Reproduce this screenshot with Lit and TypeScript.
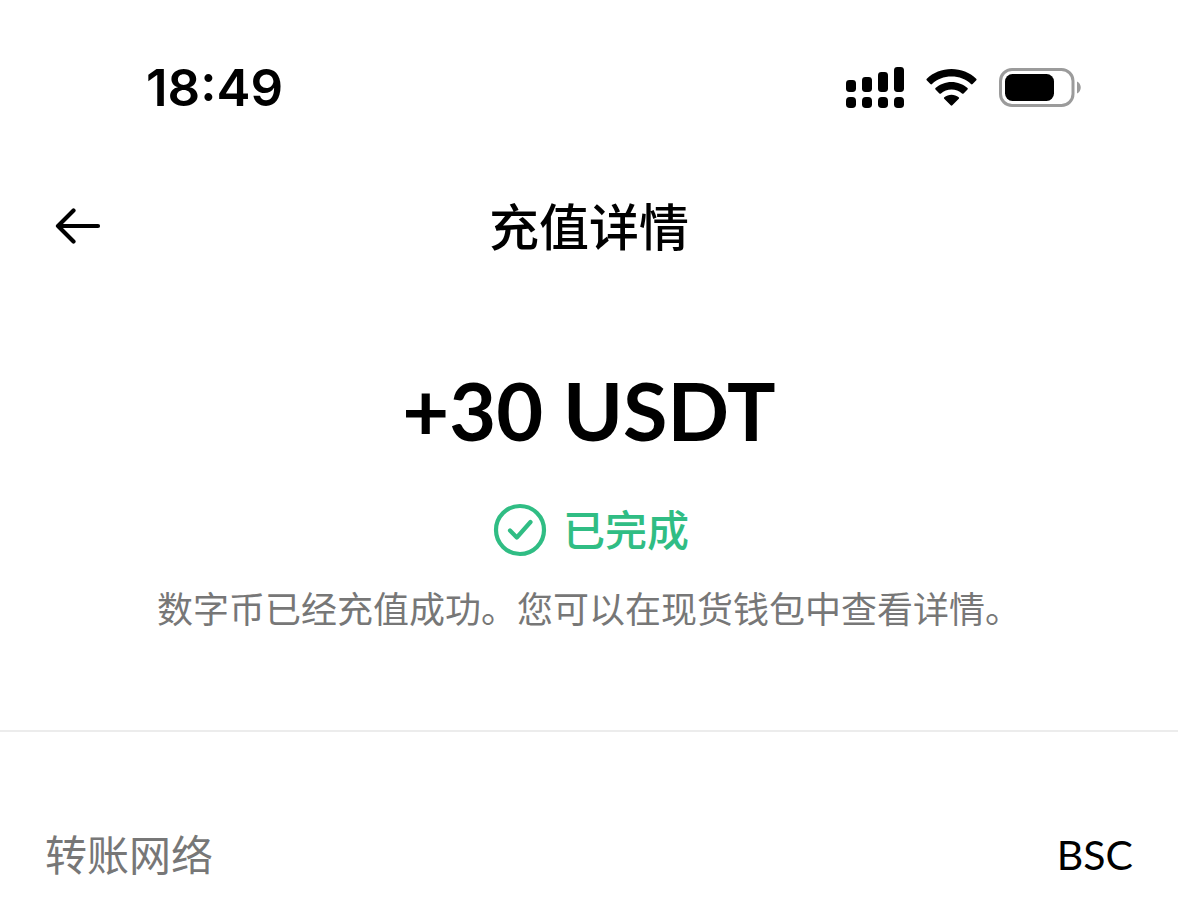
import { LitElement, html, css } from "lit";
import { customElement, property } from "lit/decorators.js";

@customElement("status-bar")
export class StatusBar extends LitElement {
  @property() time = "";

  static styles = css`
    :host {
      display: flex;
      align-items: center;
      justify-content: space-between;
      height: 176px;
      padding: 0 96px 0 146px;
      box-sizing: border-box;
    }
    .time {
      font: 600 51px/62px Inter, "Liberation Sans", sans-serif;
    }
    .icons {
      display: flex;
      align-items: center;
      gap: 22px;
    }
    svg {
      display: block;
    }
  `;

  render() {
    return html`
      <span class="time">${this.time}</span>
      <div class="icons">
        <svg width="58" height="42" viewBox="0 0 58 42" role="img" aria-label="Signal">
          <rect x="0" y="13" width="10" height="12" rx="3.4" />
          <rect x="16" y="10" width="10" height="15" rx="3.4" />
          <rect x="32" y="5" width="10" height="20" rx="3.4" />
          <rect x="48" y="0" width="10" height="25" rx="3.4" />
          <rect x="0" y="30" width="10" height="11" rx="3.8" />
          <rect x="16" y="30" width="10" height="11" rx="3.8" />
          <rect x="32" y="30" width="10" height="11" rx="3.8" />
          <rect x="48" y="30" width="10" height="11" rx="3.8" />
        </svg>
        <svg width="51" height="38" viewBox="0 0 51 38" role="img" aria-label="Wi-Fi">
          <path d="M25.5 0C35 0 43.8 3.6 50.2 9.7Q51 10.5 50.3 11.3L46.6 15.1Q45.8 15.800 45 15.100C40 10.200 33.100 7.600 25.500 7.600S11 10.200 6 15.100Q5.200 15.800 4.400 15.100L0.700 11.300Q0 10.500 0.800 9.700C7.200 3.600 16 0 25.500 0Z" />
          <path d="M25.500 12.900C31.500 12.900 37.300 15.200 41.500 19.100Q42.200 19.900 41.500 20.600L37.600 24.500Q36.800 25.200 36 24.500C33.200 21.900 29.500 20.500 25.500 20.500S17.800 21.900 15 24.500Q14.200 25.200 13.400 24.500L9.500 20.600Q8.800 19.900 9.500 19.100C13.700 15.200 19.500 12.900 25.500 12.900Z" />
          <path d="M25.500 25.700C28.100 25.700 30.700 26.600 32.700 28.200Q33.500 29 32.800 29.700L26.300 36.300Q25.500 37.100 24.700 36.300L18.200 29.700Q17.500 29 18.300 28.200C20.300 26.600 22.900 25.700 25.500 25.700Z" />
        </svg>
        <svg width="83" height="40" viewBox="0 0 83 40" role="img" aria-label="Battery">
          <rect x="1.500" y="1.500" width="72.500" height="36" rx="11.500" fill="none" stroke="#9b9b9b" stroke-width="3" />
          <rect x="6" y="6" width="49" height="27" rx="7.500" />
          <path d="M78 13.500C83 15.500 83 23.500 78 25.500Z" fill="#9b9b9b" />
        </svg>
      </div>
    `;
  }
}

@customElement("app-root")
export class AppRoot extends LitElement {
  static styles = css`
    :host {
      display: block;
      min-height: 100vh;
      background: #fff;
      color: #000;
      font-family: Lato, "Noto Sans CJK SC", sans-serif;
    }
    .nav {
      display: grid;
      grid-template-columns: 100px 1fr 100px;
      align-items: center;
      height: 100px;
      padding: 0 28px;
    }
    .back {
      display: flex;
      justify-content: center;
      padding: 24px 0;
      border: 0;
      background: none;
      color: inherit;
      cursor: pointer;
    }
    h1 {
      margin: 0;
      padding-bottom: 4px;
      text-align: center;
      font-family: "Noto Sans CJK SC", sans-serif;
      font-size: 50px;
      font-weight: 500;
      line-height: 72px;
    }
    .summary {
      padding: 86px 48px 94px;
      border-bottom: 2px solid #ececec;
      text-align: center;
    }
    .amount {
      margin: 0;
      font-size: 81px;
      font-weight: 700;
      line-height: 96px;
    }
    .state {
      display: flex;
      align-items: center;
      justify-content: center;
      gap: 16px;
      margin: 42px 0 22px;
      padding-left: 4px;
      color: #30bd84;
      font-size: 42px;
      font-weight: 500;
      line-height: 60px;
    }
    .note {
      margin: 0;
      color: #777;
      font-size: 36px;
      line-height: 54px;
    }
    .details {
      margin: 0;
      padding: 92px 45px 32px;
    }
    .row {
      display: flex;
      align-items: center;
      justify-content: space-between;
      font-size: 42px;
      line-height: 62px;
    }
    dt {
      color: #777;
    }
    dd {
      margin: 0;
      font-size: 41px;
    }
  `;

  render() {
    return html`
      <status-bar time="18:49"></status-bar>
      <header class="nav">
        <button class="back" aria-label="返回">
          <svg width="46" height="36" viewBox="0 0 46 36" fill="none" stroke="currentColor" stroke-width="4.200" stroke-linecap="round" stroke-linejoin="round">
            <path d="M18.500 2.500L3 18L18.500 33.500M3 18H43" />
          </svg>
        </button>
        <h1>充值详情</h1>
      </header>
      <main>
        <section class="summary">
          <p class="amount">+30 USDT</p>
          <p class="state">
            <svg width="54" height="54" viewBox="0 0 54 54" fill="none" stroke="currentColor" stroke-width="4.200" stroke-linecap="round" stroke-linejoin="round" aria-hidden="true">
              <circle cx="27" cy="27" r="24" />
              <path d="M17 27.500L23.800 34.500L37.500 19" />
            </svg>
            <span>已完成</span>
          </p>
          <p class="note">数字币已经充值成功。您可以在现货钱包中查看详情。</p>
        </section>
        <dl class="details">
          <div class="row">
            <dt>转账网络</dt>
            <dd>BSC</dd>
          </div>
        </dl>
      </main>
    `;
  }
}
